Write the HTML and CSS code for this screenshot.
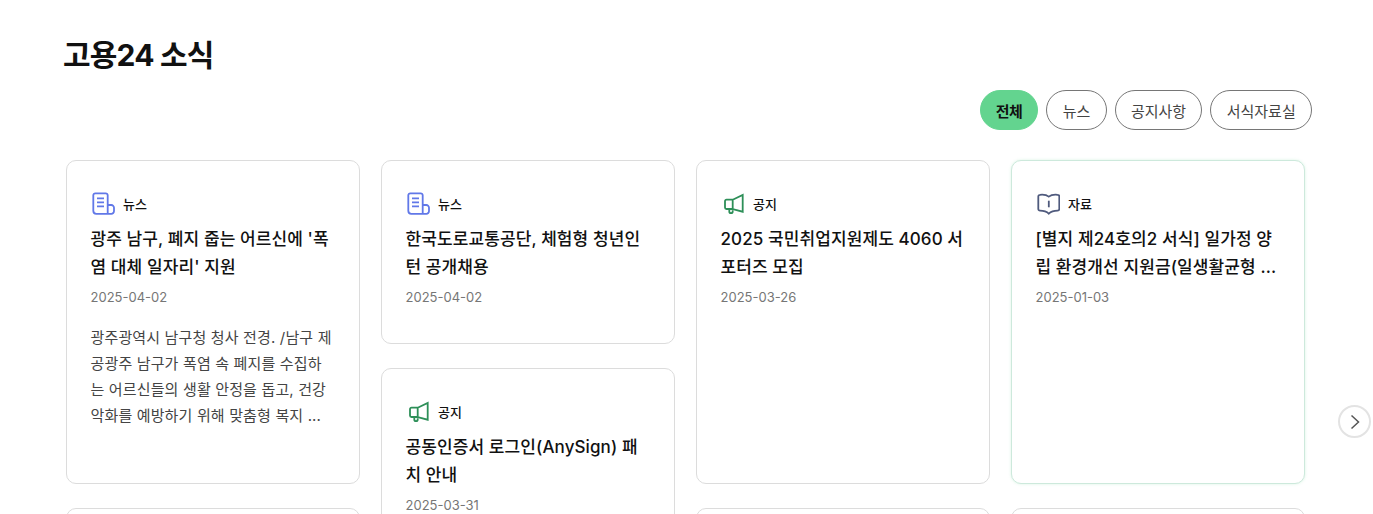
FILE: index.html
```html
<!DOCTYPE html>
<html lang="ko">
<head>
    <meta charset="UTF-8">
    <meta name="viewport" content="width=device-width, initial-scale=1.0">
    <title>고용24 소식</title>
    <link rel="stylesheet" href="styles.css">
</head>
<body>

    <svg class="icon-defs" width="0" height="0">
        <symbol id="icon-news" viewBox="0 0 24 24">
            <path d="M16.700 21.800V3.300a2 2 0 0 0-2-2H4.300a2 2 0 0 0-2 2V18.800a3 3 0 0 0 3 3H20.300a2.700 2.700 0 0 0 2.700-2.700v-3.400a2.700 2.700 0 0 0-2.700-2.700h-3.600"/>
            <path d="M6 6.300h7M6 10.300h7M6 14.300h7"/>
        </symbol>
        <symbol id="icon-notice" viewBox="0 0 24 24">
            <path d="M11.700 7.700 21.700 3v16.700L11.700 17z"/>
            <path d="M11.700 7.700H5.500A1.500 1.500 0 0 0 4 9.200v6.300A1.500 1.500 0 0 0 5.500 17h6.200"/>
            <path d="M8.300 17v2.500a1.700 1.700 0 0 0 3.400 0v-1.200"/>
        </symbol>
        <symbol id="icon-file" viewBox="0 0 24 24">
            <path d="M12.800 4.600C11 3.200 7 2.500 4 2.800A1.700 1.700 0 0 0 2.300 4.500v12.500A1.700 1.700 0 0 0 4 18.700c3.500 0 6.500.8 8.800 3 2.300-2.200 5.300-3 8.800-3a1.700 1.700 0 0 0 1.700-1.700V4.500a1.700 1.700 0 0 0-1.700-1.700c-3-.3-7 .4-8.800 1.800z"/>
            <path d="M12.800 8.700v6.600"/>
        </symbol>
    </svg>

    <main class="section">
        <h1 class="section-title">고용24 소식</h1>

        <div class="tabs">
            <button class="tab tab-active">전체</button>
            <button class="tab">뉴스</button>
            <button class="tab">공지사항</button>
            <button class="tab">서식자료실</button>
        </div>

        <div class="board">
            <div class="board-col">
                <article class="card card-tall">
                    <div class="card-tag"><svg class="icon icon-blue"><use href="#icon-news"/></svg><span class="card-tag-name">뉴스</span></div>
                    <h2 class="card-title">광주 남구, 폐지 줍는 어르신에 '폭염 대체 일자리' 지원</h2>
                    <div class="card-date">2025-04-02</div>
                    <p class="card-text">광주광역시 남구청 청사 전경. /남구 제공광주 남구가 폭염 속 폐지를 수집하는 어르신들의 생활 안정을 돕고, 건강 악화를 예방하기 위해 맞춤형 복지 ...</p>
                </article>
                <article class="card card-short"></article>
            </div>

            <div class="board-col">
                <article class="card card-short">
                    <div class="card-tag"><svg class="icon icon-blue"><use href="#icon-news"/></svg><span class="card-tag-name">뉴스</span></div>
                    <h2 class="card-title">한국도로교통공단, 체험형 청년인턴 공개채용</h2>
                    <div class="card-date">2025-04-02</div>
                </article>
                <article class="card card-short">
                    <div class="card-tag"><svg class="icon icon-green"><use href="#icon-notice"/></svg><span class="card-tag-name">공지</span></div>
                    <h2 class="card-title">공동인증서 로그인(AnySign) 패치 안내</h2>
                    <div class="card-date">2025-03-31</div>
                </article>
            </div>

            <div class="board-col">
                <article class="card card-tall">
                    <div class="card-tag"><svg class="icon icon-green"><use href="#icon-notice"/></svg><span class="card-tag-name">공지</span></div>
                    <h2 class="card-title">2025 국민취업지원제도 4060 서포터즈 모집</h2>
                    <div class="card-date">2025-03-26</div>
                </article>
                <article class="card card-short"></article>
            </div>

            <div class="board-col">
                <article class="card card-tall card-hover">
                    <div class="card-tag"><svg class="icon icon-navy"><use href="#icon-file"/></svg><span class="card-tag-name">자료</span></div>
                    <h2 class="card-title">[별지 제24호의2 서식] 일가정 양립 환경개선 지원금(일생활균형 ...</h2>
                    <div class="card-date">2025-01-03</div>
                </article>
                <article class="card card-short"></article>
            </div>
        </div>

        <button class="next-btn" aria-label="다음">
            <svg width="12" height="16" viewBox="0 0 12 16"><path d="M2.500 1.500 9.500 8l-7 6.500"/></svg>
        </button>
    </main>

</body>
</html>
```

FILE: styles.css
```css
:root {
    --text-color: #111111;
    --body-color: #444444;
    --date-color: #767676;
    --border-color: #dcdcdc;
    --tab-border: #767676;
    --tab-active: #63d48f;
}

html, body {
    height: 514px;
    overflow: hidden;
}

body {
    margin: 0;
    background: #ffffff;
    color: var(--text-color);
    font-family: Inter, "Noto Sans CJK KR", sans-serif;
}

.icon-defs {
    position: absolute;
}

.section {
    position: relative;
    padding: 34px 61px 0 63px;
}

.section-title {
    margin: 0;
    font-size: 30px;
    line-height: 42px;
    font-weight: 700;
    letter-spacing: -0.8px;
}

/* Filter tabs */
.tabs {
    display: flex;
    justify-content: flex-end;
    gap: 8px;
    margin-top: 14px;
}

.tab {
    height: 40px;
    padding: 0 15.3px;
    border: 1px solid var(--tab-border);
    border-radius: 20px;
    background: #ffffff;
    color: var(--body-color);
    font-family: inherit;
    font-size: 15px;
}

.tab-active {
    padding: 0 15px;
    border-color: var(--tab-active);
    background: var(--tab-active);
    color: var(--text-color);
    font-weight: 700;
    letter-spacing: -0.5px;
}

/* Card board */
.board {
    display: flex;
    gap: 21px;
    margin: 30px 0 0 3px;
}

.board-col {
    display: flex;
    flex-direction: column;
    gap: 24px;
    width: 294px;
}

.card {
    box-sizing: border-box;
    padding: 31px 24px 0 23.5px;
    border: 1px solid var(--border-color);
    border-radius: 10px;
    background: #ffffff;
}

.card-tall {
    height: 324px;
}

.card-short {
    height: 184px;
}

.card-hover {
    border-color: #cde9dc;
    box-shadow: 0 0 3px rgba(99, 212, 143, 0.25);
}

.card-tag {
    display: flex;
    align-items: center;
    gap: 8.5px;
    height: 24px;
    font-size: 13px;
    font-weight: 500;
}

.card-tag-name {
    margin-bottom: 1px;
}

.icon {
    width: 24px;
    height: 24px;
    fill: none;
    stroke-width: 1.8;
}

.icon-blue {
    stroke: #6178e8;
}

.icon-green {
    stroke: #2d8f58;
}

.icon-navy {
    stroke: #4f5a7d;
}

.card-title {
    margin: 9px 0 0;
    font-size: 17px;
    line-height: 28px;
    font-weight: 500;
    letter-spacing: 0.1px;
}

.card-date {
    margin-top: 4px;
    color: var(--date-color);
    font-size: 13px;
    line-height: 24px;
}

.card-text {
    max-width: 244px;
    margin: 16px 0 0;
    color: var(--body-color);
    font-size: 15px;
    line-height: 26px;
    letter-spacing: 0.15px;
}

/* Carousel arrow */
.next-btn {
    position: absolute;
    top: 405px;
    left: 1338px;
    display: flex;
    align-items: center;
    justify-content: center;
    width: 33px;
    height: 33px;
    padding: 0;
    border: 2px solid #e3e3e3;
    border-radius: 50%;
    background: #ffffff;
}

.next-btn path {
    fill: none;
    stroke: #555555;
    stroke-width: 1.5;
}
```
